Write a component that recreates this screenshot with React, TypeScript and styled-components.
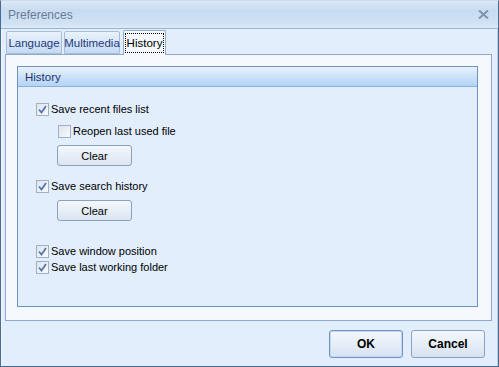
import React from 'react'
import styled, { createGlobalStyle } from 'styled-components'

const Global = createGlobalStyle`
html, body {
  margin: 0;
  padding: 0;
  width: 499px;
  height: 367px;
  overflow: hidden;
  font-family: "Liberation Sans", Arial, sans-serif;
}
`

const Check = ({ checked }: { checked: boolean }) => (
  <Box>
    {checked && (
      <svg width="9" height="9" viewBox="0 0 9 9">
        <path d="M1 4.5 L3.5 7.5 L8 1" fill="none" stroke="#5277ad" strokeWidth="1.8" />
      </svg>
    )}
  </Box>
)

const Option = ({ label, checked, indent }: { label: string; checked: boolean; indent?: boolean }) => (
  <Row indent={indent}>
    <Check checked={checked} />
    <Label>{label}</Label>
  </Row>
)

const App = () => {
  return (
    <>
      <Global />
      <Window>
        <TitleBar>
          <Title>Preferences</Title>
          <Close>
            <svg width="11" height="9" viewBox="0 0 11 9">
              <path d="M1 0.5 L10 8.5 M10 0.5 L1 8.5" stroke="#8393aa" strokeWidth="2" />
            </svg>
          </Close>
        </TitleBar>
        <Body>
          <Tabs>
            <Tab w={56}>Language</Tab>
            <Tab w={56}>Multimedia</Tab>
            <Tab w={43} active>
              <Focus>History</Focus>
            </Tab>
          </Tabs>
          <Panel>
            <Group>
              <GroupHeader>History</GroupHeader>
              <GroupBody>
                <Option label="Save recent files list" checked />
                <Option label="Reopen last used file" checked={false} indent />
                <SmallButton>Clear</SmallButton>
                <Spacer h={12} />
                <Option label="Save search history" checked />
                <SmallButton>Clear</SmallButton>
                <Spacer h={22} />
                <Option label="Save window position" checked />
                <Option label="Save last working folder" checked />
              </GroupBody>
            </Group>
          </Panel>
          <Footer>
            <BigButton primary>OK</BigButton>
            <BigButton>Cancel</BigButton>
          </Footer>
        </Body>
      </Window>
    </>
  )
}

export default App

const Window = styled.div`
width: 499px;
height: 367px;
box-sizing: border-box;
border: 1px solid #4a6a94;
border-top-color: #c9dbef;
background-color: #e2eefc;
display: flex;
flex-direction: column;
`

const TitleBar = styled.div`
height: 27px;
flex-shrink: 0;
background: linear-gradient(#dbe7f5 0%, #c7dcf2 35%, #cfe1f4 80%, #dde9f6 100%);
border-bottom: 1px solid #9ab6d3;
display: flex;
align-items: center;
justify-content: space-between;
padding: 0 8px 0 7px;
`

const Title = styled.div`
font-size: 12px;
color: #6b7c92;
`

const Close = styled.div`
display: flex;
align-items: center;
margin-right: 1px;
`

const Body = styled.div`
flex: 1;
display: flex;
flex-direction: column;
padding: 0 5px 0 3px;
border-left: 1px solid #f2f7fd;
border-right: 1px solid #b9cde6;
`

const Tabs = styled.div`
display: flex;
align-items: flex-end;
height: 25px;
padding-left: 1px;
gap: 2px;
`

const Tab = styled.div<{ active?: boolean; w: number }>`
width: ${p => p.w}px;
height: ${p => (p.active ? '25px' : '23px')};
box-sizing: border-box;
margin-left: ${p => (p.active ? '1px' : '0')};
margin-bottom: ${p => (p.active ? '-1px' : '0')};
display: flex;
align-items: center;
justify-content: center;
font-size: 11.5px;
color: ${p => (p.active ? '#000' : '#1f3b7a')};
border: 1px solid ${p => (p.active ? '#93acca' : '#a7bdd8')};
border-bottom: ${p => (p.active ? 'none' : '1px solid #a7bdd8')};
border-radius: 2px 2px 0 0;
background: ${p => (p.active ? '#f5f9fe' : 'linear-gradient(#eaf2fc, #c4daf3)')};
position: relative;
z-index: ${p => (p.active ? 1 : 0)};
`

const Focus = styled.span`
outline: 1px dotted #000;
outline-offset: 1px;
padding: 1px 0;
line-height: 14px;
`

const Panel = styled.div`
height: 267px;
box-sizing: border-box;
border: 1px solid #8fa9c9;
background-color: #f5f9fe;
padding: 11px 13px 13px 11px;
display: flex;
`

const Group = styled.div`
flex: 1;
border: 1px solid #6d91c0;
background-color: #e2eefc;
display: flex;
flex-direction: column;
`

const GroupHeader = styled.div`
height: 19px;
border-bottom: 1px solid #8eb0d9;
background: linear-gradient(#e9f2fc, #b2d3f6);
display: flex;
align-items: center;
padding-left: 7px;
font-size: 11.5px;
color: #1c3468;
`

const GroupBody = styled.div`
display: flex;
flex-direction: column;
align-items: flex-start;
padding: 14px 0 0 18px;
`

const Row = styled.div<{ indent?: boolean }>`
display: flex;
align-items: center;
height: 16px;
margin-left: ${p => (p.indent ? '22px' : '0')};
margin-top: ${p => (p.indent ? '6px' : '0')};
`

const Box = styled.div`
width: 11px;
height: 11px;
border: 1px solid #9fb0c7;
background: linear-gradient(135deg, #dfe5ee, #f8fafd);
display: flex;
align-items: center;
justify-content: center;
margin-right: 2px;
`

const Label = styled.span`
font-size: 11px;
color: #000;
`

const SmallButton = styled.button`
width: 75px;
height: 21px;
margin: 6px 0 0 21px;
padding: 0;
font-family: "Liberation Sans", Arial, sans-serif;
font-size: 11px;
color: #000;
border: 1px solid #8ba0bd;
border-radius: 3px;
background: linear-gradient(#f4f7fb 0%, #e7eef7 50%, #dbe5f1 100%);
`

const Spacer = styled.div<{ h: number }>`
height: ${p => p.h}px;
`

const Footer = styled.div`
flex: 1;
display: flex;
justify-content: flex-end;
align-items: flex-start;
gap: 8px;
padding: 9px 7px 0 0;
`

const BigButton = styled.button<{ primary?: boolean }>`
width: 74px;
height: 28px;
padding: 0;
font-family: "Liberation Sans", Arial, sans-serif;
font-weight: bold;
font-size: 12px;
color: #000;
border: 1px solid ${p => (p.primary ? '#6e93c2' : '#8ba0bd')};
border-radius: 3px;
background: linear-gradient(#f3f7fc 0%, #e6eef8 50%, #d6e2f0 100%);
box-shadow: ${p => (p.primary ? 'inset 0 0 0 1px #c5daf2' : 'none')};
`
